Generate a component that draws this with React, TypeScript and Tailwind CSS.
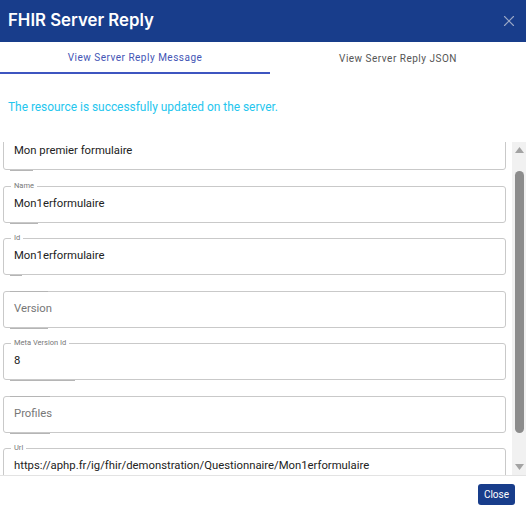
import { X } from "lucide-react";

type Field = {
  label: string;
  value: string;
  notch: number; // width of the leftover outline segment under the label
};

const FIELDS: Field[] = [
  { label: "", value: "Mon premier formulaire", notch: 23 },
  { label: "Name", value: "Mon1erformulaire", notch: 28 },
  { label: "Id", value: "Mon1erformulaire", notch: 12 },
  { label: "", value: "Version", notch: 38 },
  { label: "Meta Version Id", value: "8", notch: 65 },
  { label: "", value: "Profiles", notch: 40 },
  { label: "Url", value: "https://aphp.fr/ig/fhir/demonstration/Questionnaire/Mon1erformulaire", notch: 0 },
];

const OutlinedField = ({ field, first }: { field: Field; first?: boolean }) => {
  const empty = field.label === "" && !first;
  return (
    <div className="relative h-[37px] shrink-0 rounded-[3px] border border-[#c9c9c9] flex items-center pl-[10px]">
      {/* Label sitting in the top border */}
      {field.label && (
        <span className="absolute -top-[6px] left-[7px] bg-white px-[3px] text-[7.5px] leading-[10px] text-[#777]">
          {field.label}
        </span>
      )}
      {empty && (
        <span
          className="absolute -top-[1px] left-[6px] h-[1px] bg-[#b5b5b5]"
          style={{ width: field.notch }}
        />
      )}
      {field.notch > 0 && (
        <span
          className="absolute -bottom-[2px] left-[6px] h-[1px] bg-[#b5b5b5]"
          style={{ width: field.notch }}
        />
      )}
      <span className={`text-[11.3px] whitespace-nowrap ${empty ? "text-[#777]" : "text-[#222]"}`}>
        {field.value}
      </span>
    </div>
  );
};

export default function App() {
  return (
    <div
      className="w-[526px] h-[513px] bg-white flex flex-col overflow-hidden"
      style={{ fontFamily: "Roboto, 'Liberation Sans', sans-serif" }}
    >
      {/* Header */}
      <div className="h-[42px] shrink-0 bg-[#183d8b] flex items-center justify-between pl-[8px] pr-[8px]">
        <h1
          className="text-white text-[16.8px] font-semibold"
          style={{ fontFamily: "Inter, 'Liberation Sans', sans-serif" }}
        >
          FHIR Server Reply
        </h1>
        <X className="w-[18px] h-[18px] text-[#9aa8c6]" strokeWidth={1.5} />
      </div>

      {/* Tabs */}
      <div className="h-[32px] shrink-0 flex">
        <div className="w-[270px] flex items-center justify-center border-b-2 border-[#3d55c0]">
          <span className="text-[10px] tracking-[0.5px] text-[#4355b5]">View Server Reply Message</span>
        </div>
        <div className="flex-1 flex items-center justify-center">
          <span className="text-[10px] tracking-[0.5px] text-[#555]">View Server Reply JSON</span>
        </div>
      </div>

      {/* Status */}
      <div className="h-[68px] shrink-0 flex items-center pl-[8px]">
        <p className="text-[11.9px] text-[#25c6ee]">The resource is successfully updated on the server.</p>
      </div>

      {/* Scroll area */}
      <div className="h-[334px] shrink-0 flex overflow-hidden border-b border-[#e3e3e3]">
        <div className="flex-1 pl-[3px] pr-[6px] overflow-hidden">
          <div className="flex flex-col gap-[15.5px] -mt-[9px]">
            {FIELDS.map((f, i) => (
              <OutlinedField key={i} field={f} first={i === 0} />
            ))}
          </div>
        </div>
        {/* Scrollbar */}
        <div className="w-[14px] bg-[#f1f1f1] flex flex-col items-center pt-[5px] pb-[5px]">
          <svg width="9" height="6" viewBox="0 0 9 6">
            <path d="M0 6 L4.5 0 L9 6 Z" fill="#a3a3a3" />
          </svg>
          <div className="w-[9px] h-[262px] rounded-full bg-[#8c8c8c] mt-[18px]" />
          <div className="flex-1" />
          <svg width="9" height="6" viewBox="0 0 9 6">
            <path d="M0 0 L4.5 6 L9 0 Z" fill="#a3a3a3" />
          </svg>
        </div>
      </div>

      {/* Footer */}
      <div className="flex-1 flex items-center justify-end pr-[11px]">
        <button className="bg-[#183d8b] text-white text-[10px] rounded-[3px] px-[6px] h-[21px]">Close</button>
      </div>
    </div>
  );
}
